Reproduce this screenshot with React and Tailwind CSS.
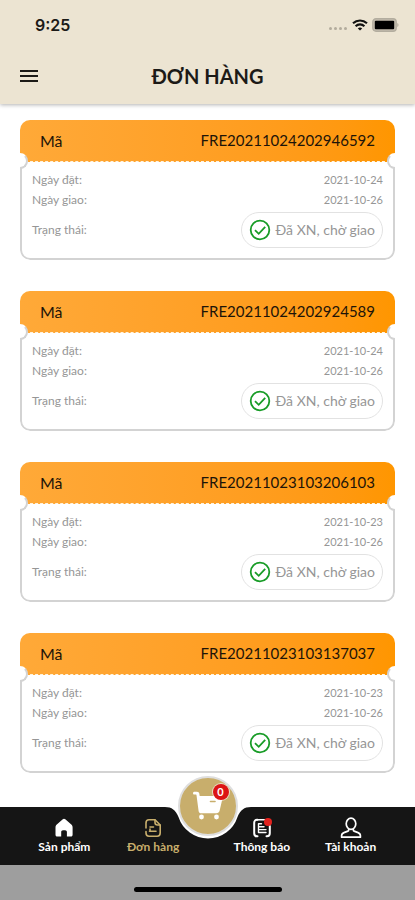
import { useState } from "react";

const orders = [
	{ code: "FRE20211024202946592", placed: "2021-10-24", delivery: "2021-10-26" },
	{ code: "FRE20211024202924589", placed: "2021-10-24", delivery: "2021-10-26" },
	{ code: "FRE20211023103206103", placed: "2021-10-23", delivery: "2021-10-26" },
	{ code: "FRE20211023103137037", placed: "2021-10-23", delivery: "2021-10-26" },
];

function StatusBar() {
	return (
		<div className="flex h-[50px] items-center justify-between pr-4 pl-[35px]">
			<span className="text-base font-semibold font-['Inter',sans-serif]">9:25</span>
			<div className="flex items-center gap-1">
				<svg width="20" height="12" viewBox="0 0 20 12" fill="#b3ac9d">
					<circle cx="2.5" cy="9.5" r="1.5" />
					<circle cx="7.5" cy="9.5" r="1.5" />
					<circle cx="12.5" cy="9.5" r="1.5" />
					<circle cx="17.5" cy="9.5" r="1.5" />
				</svg>
				<svg width="16" height="12" viewBox="0 0 16 12" fill="none" stroke="#111" strokeWidth="2.1">
					<path d="M1 4.3c4-3.8 10-3.8 14 0" />
					<path d="M3.6 7.2c2.5-2.4 6.3-2.4 8.8 0" />
					<path d="M8 11.6 5.8 9.4c1.2-1.1 3.2-1.1 4.4 0z" fill="#111" stroke="none" />
				</svg>
				<svg width="27" height="14" viewBox="0 0 27 14">
					<rect x="0.8" y="0.8" width="23.4" height="12.4" rx="3.2" fill="#c4bdae" stroke="#b3ad9f" strokeWidth="1.4" />
					<rect x="2.8" y="2.8" width="19.4" height="8.4" rx="1" fill="#000" />
					<path d="M25.4 5v4c1.4-.5 1.4-3.5 0-4z" fill="#aaa497" />
				</svg>
			</div>
		</div>
	);
}

function Header() {
	return (
		<header className="relative z-10 h-[104px] bg-[#ece4d2] shadow-[0_1px_4px_rgba(0,0,0,0.3)]">
			<StatusBar />
			<div className="grid h-[52px] grid-cols-[1fr_auto_1fr] items-center px-5">
				<button aria-label="Menu" className="w-[18px]">
					<svg width="18" height="14" viewBox="0 0 18 14" stroke="#1c1a17" strokeWidth="2">
						<path d="M0 2h18M0 7h18M0 12h18" />
					</svg>
				</button>
				<h1 className="text-xl font-bold">ĐƠN HÀNG</h1>
			</div>
		</header>
	);
}

function OrderCard({ order }) {
	return (
		<article className="relative overflow-hidden rounded-[10px]">
			<div className="flex h-[42px] items-center justify-between border-b border-dashed border-[#fff3df] bg-linear-to-r from-[#ffa938] to-[#ff9600] px-5 text-[#1d1408]">
				<span className="text-base">Mã</span>
				<span className="text-[15px]">{order.code}</span>
			</div>
			<dl className="h-[98px] rounded-b-[10px] border-x-2 border-b-2 border-[#d3d3d3] bg-white px-2.5 pt-2 text-xs text-[#969696]">
				<div className="flex h-5 items-center justify-between">
					<dt>Ngày đặt:</dt>
					<dd className="text-[11px]">{order.placed}</dd>
				</div>
				<div className="flex h-5 items-center justify-between">
					<dt>Ngày giao:</dt>
					<dd className="text-[11px]">{order.delivery}</dd>
				</div>
				<div className="flex h-10 items-center justify-between">
					<dt>Trạng thái:</dt>
					<dd className="flex h-9 items-center gap-[5px] rounded-full border border-[#e2e2e2] px-[7px] text-sm">
						<svg width="22" height="22" viewBox="0 0 22 22" fill="none" stroke="#189c27" strokeWidth="1.8">
							<circle cx="11" cy="11" r="9.3" />
							<path d="m6 11.2 3.7 3.6 6.5-7" />
						</svg>
						Đã XN, chờ giao
					</dd>
				</div>
			</dl>
			<span className="absolute top-[33px] -left-2 size-4 rounded-full border-2 border-[#d3d3d3] border-t-white bg-white" />
			<span className="absolute top-[33px] -right-2 size-4 rounded-full border-2 border-[#d3d3d3] border-t-white bg-white" />
		</article>
	);
}

function HomeIcon() {
	return (
		<svg width="20" height="20" viewBox="0 0 20 20" fill="currentColor">
			<path d="M10 .8c.5 0 .9.2 1.3.5l6 5.3c.8.7 1.300 1.700 1.300 2.800v7.300c0 1-.7 1.800-1.700 1.800h-4V14c0-1-.8-1.800-1.800-1.800H9c-1 0-1.800.8-1.800 1.800v4.500h-4c-1 0-1.700-.8-1.700-1.800V9.400c0-1.100.5-2.100 1.300-2.800l6-5.300c.3-.3.700-.5 1.200-.5z" />
		</svg>
	);
}

function OrderIcon() {
	return (
		<svg width="20" height="20" viewBox="0 0 20 20" fill="none" stroke="currentColor" strokeWidth="1.6" strokeLinecap="round" strokeLinejoin="round">
			<path d="M3 10V5c0-1.800 1.300-3.200 3-3.200h6L17.200 7v8c0 1.800-1.300 3.200-3 3.200H6c-1.700 0-3-1.400-3-3.200v-1.500" />
			<path d="M12 2v2.500C12 6 13 7 14.500 7H17M7 9h3.500M6.500 13.200H13M7 11v2" />
		</svg>
	);
}

function NoticeIcon() {
	return (
		<svg width="20" height="20" viewBox="0 0 20 20" fill="none" stroke="currentColor" strokeWidth="2" strokeLinecap="round">
			<path d="M5.500 1.800H5C3.300 1.800 2.200 3 2.200 4.700v10.600c0 1.800 1.100 3 2.800 3h.5M14.500 18.300h.5c1.700 0 2.800-1.200 2.800-3V8" />
			<path d="M5.500 1.800h7M6.500 5.800h3M6.500 8.800h5.500M6.500 11.600h7.500M6.500 14.500h7.500M6.500 5.800v8.700" strokeWidth="1.400" />
			<circle cx="16" cy="4" r="4" fill="#e3231f" stroke="none" />
		</svg>
	);
}

function UserIcon() {
	return (
		<svg width="22" height="22" viewBox="0 0 22 22" fill="none" stroke="currentColor" strokeWidth="1.7" strokeLinejoin="round">
			<ellipse cx="11" cy="6.800" rx="4.800" ry="5.600" />
			<path d="M8.700 12v1c0 .5-.3.900-.8 1.100l-3.900 1.500c-1.600.6-2.400 1.700-2.400 3.200v1.400h18.800v-1.400c0-1.500-.8-2.600-2.400-3.200l-3.900-1.500c-.5-.2-.8-.6-.8-1.100v-1" />
		</svg>
	);
}

const tabs = [
	{ id: "products", label: "Sản phẩm", Icon: HomeIcon },
	{ id: "orders", label: "Đơn hàng", Icon: OrderIcon },
	{ id: "notices", label: "Thông báo", Icon: NoticeIcon },
	{ id: "account", label: "Tài khoản", Icon: UserIcon },
];

function TabButton({ tab, active, onSelect }) {
	return (
		<button
			onClick={() => onSelect(tab.id)}
			className={`flex flex-1 flex-col items-center text-xs font-bold whitespace-nowrap ${active ? "text-[#c8ae6c]" : "text-white"}`}
		>
			<span className="flex h-[22px] items-center">
				<tab.Icon />
			</span>
			{tab.label}
		</button>
	);
}

function BottomNav() {
	const [active, setActive] = useState("orders");

	return (
		<footer className="sticky bottom-0 z-10">
			<nav className="relative flex h-[58px] items-center gap-5 bg-[#151515] px-5">
				<div className="flex flex-1">
					{tabs.slice(0, 2).map((tab) => (
						<TabButton key={tab.id} tab={tab} active={active === tab.id} onSelect={setActive} />
					))}
				</div>
				<div className="flex flex-1">
					{tabs.slice(2).map((tab) => (
						<TabButton key={tab.id} tab={tab} active={active === tab.id} onSelect={setActive} />
					))}
				</div>
				{/* cut-out in the bar under the cart button */}
				<svg className="pointer-events-none absolute top-0 left-1/2 -translate-x-1/2" width="92" height="34" viewBox="0 0 92 34" fill="#fff">
					<path d="M3 0h86c-7 0-10.500 3-13.500 10A31 31 0 0 1 16.500 10C13.500 3 10 0 3 0z" />
				</svg>
				<button
					aria-label="Giỏ hàng"
					className="absolute -top-[31px] left-1/2 flex size-[60px] -translate-x-1/2 items-center justify-center rounded-full border-2 border-[#dedede] bg-[#c8ae6c] text-white"
				>
					<svg width="30" height="30" viewBox="0 0 30 30" fill="currentColor">
						<path d="M1 .8h3c1.200 0 2.100.7 2.300 1.800L6.700 5H28c1.200 0 1.900.9 1.600 2.100l-3 12.600c-.4 1.600-1.500 2.500-3.200 2.500H8.300c-1.500 0-2.500-.9-2.700-2.300L3.500 4.300 3.200 3.500H1c-1.300-.3-1.300-2.400 0-2.700z" />
						<path d="M17.500 10.500h4.500" stroke="#c8ae6c" strokeWidth="1.600" strokeLinecap="round" />
						<circle cx="8.500" cy="26" r="2.400" />
						<circle cx="23.500" cy="26" r="2.400" />
					</svg>
					<span className="absolute top-[6px] right-[7px] flex size-4 items-center justify-center rounded-full bg-[#dc1414] text-[11px] font-bold ring-1 ring-white/60">
						0
					</span>
				</button>
			</nav>
			<div className="flex h-[35px] justify-center bg-[#9e9e9e] pt-[22px]">
				<span className="h-[5px] w-[148px] rounded-full bg-black" />
			</div>
		</footer>
	);
}

export default function App() {
	return (
		<div className="flex min-h-screen flex-col bg-white font-['Lato',sans-serif] text-[#1c1a17]">
			<Header />
			<main className="flex flex-1 flex-col gap-[31px] px-5 pt-4 pb-8">
				{orders.map((order) => (
					<OrderCard key={order.code} order={order} />
				))}
			</main>
			<BottomNav />
		</div>
	);
}
